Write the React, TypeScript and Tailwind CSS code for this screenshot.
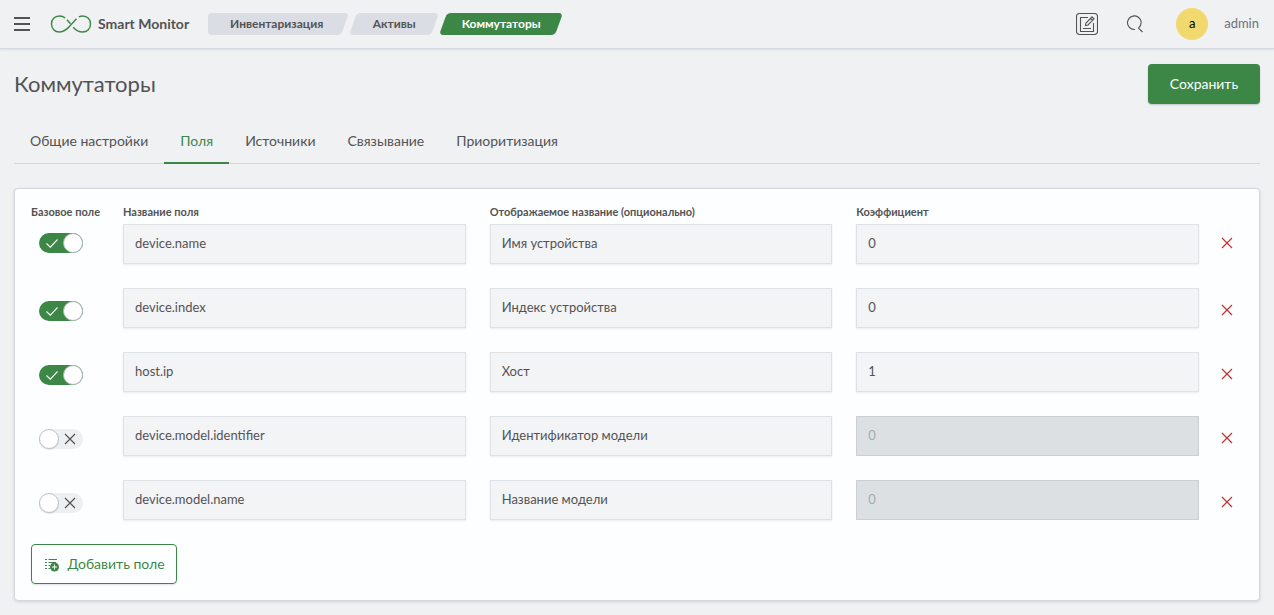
import React, { useState } from "react";

type Field = {
  id: number;
  base: boolean;
  name: string;
  title: string;
  ratio: string;
};

const initialFields: Field[] = [
  { id: 1, base: true, name: "device.name", title: "Имя устройства", ratio: "0" },
  { id: 2, base: true, name: "device.index", title: "Индекс устройства", ratio: "0" },
  { id: 3, base: true, name: "host.ip", title: "Хост", ratio: "1" },
  { id: 4, base: false, name: "device.model.identifier", title: "Идентификатор модели", ratio: "0" },
  { id: 5, base: false, name: "device.model.name", title: "Название модели", ratio: "0" },
];

const tabs = ["Общие настройки", "Поля", "Источники", "Связывание", "Приоритизация"];

const inputClass =
  "block h-10 w-full border border-[#dfe2e5] bg-[#f3f4f6] px-[11px] pb-[2px] text-[13px] text-[#535353] shadow-[0_1px_2px_rgba(0,0,0,0.08)] outline-none disabled:border-[#cad0d2] disabled:bg-[#dce0e2] disabled:text-[#a3adb3] disabled:shadow-none";

const labelClass = "mb-[6px] block whitespace-nowrap text-[11px] leading-[13px] font-bold text-[#535353]";

const Header = () => {
  return (
    <header className="box-content flex h-12 items-center border-b border-[#d3d9e2] pr-[15px] pl-[14px] shadow-[0_1px_2px_rgba(100,110,130,0.15)]">
      <button type="button" aria-label="Меню" className="flex flex-col gap-1 text-[#535353]">
        <span className="h-[2px] w-4 bg-[#535353]" />
        <span className="h-[2px] w-4 bg-[#535353]" />
        <span className="h-[2px] w-4 bg-[#535353]" />
      </button>

      <a href="#" className="ml-5 flex items-center gap-[6px] text-sm font-bold text-[#535353]">
        <svg width="42" height="18" viewBox="0 0 42 18" fill="none" stroke="#3d8746" strokeWidth="1.4">
          <path d="M15.200 3C13.600 1.600 11.800 1 9.500 1C4.500 1 1.500 4.600 1.500 9S4.500 17 9.500 17C15 17 18 13.500 21 9.800L26.500 3.800" />
          <path d="M28.800 2C30 1.300 31.200 1 32.500 1C37.500 1 40.500 4.600 40.500 9S37.500 17 32.500 17C28 17 25.500 14.800 23.200 12.200" />
          <path d="M17 4.800L20.500 8.800" />
        </svg>
        Smart Monitor
      </a>

      <nav aria-label="Навигация" className="ml-[19px] flex gap-2 text-xs font-bold text-[#535353]">
        <a href="#" className="relative isolate flex h-[22px] w-[137px] items-center justify-center">
          <span className="absolute inset-y-0 left-0 -z-10 w-10 rounded bg-[#dadde3]" />
          <span className="absolute inset-y-0 right-0 left-2 -z-10 -skew-x-20 rounded bg-[#dadde3]" />
          Инвентаризация
        </a>
        <a href="#" className="relative isolate flex h-[22px] w-[82px] items-center justify-center">
          <span className="absolute inset-0 -z-10 -skew-x-20 rounded bg-[#dadde3]" />
          Активы
        </a>
        <a href="#" aria-current="page" className="relative isolate flex h-[22px] w-[116px] items-center justify-center text-white">
          <span className="absolute inset-0 -z-10 -skew-x-20 rounded bg-[#3d8746]" />
          Коммутаторы
        </a>
      </nav>

      <div className="ml-auto flex items-center">
        <button type="button" aria-label="Редактировать" className="text-[#535353]">
          <svg width="22" height="22" viewBox="0 0 22 22" fill="none" stroke="currentColor" strokeWidth="1.1">
            <rect x="0.5" y="0.5" width="21" height="21" rx="3" />
            <path d="M12 4.500H4.500V18.500H17.500V10M7 15.500H15" />
            <path d="M9.500 12.500L10 10L16 3.800L18 5.800L12 12L9.500 12.500ZM14.500 5.500L16.500 7.500" />
          </svg>
        </button>
        <button type="button" aria-label="Поиск" className="ml-7 text-[#535353]">
          <svg width="18" height="18" viewBox="0 0 18 18" fill="none" stroke="currentColor" strokeWidth="1.1">
            <path d="M9 14.500A6.800 6.800 0 1 1 12.500 13.100L16.500 17" />
          </svg>
        </button>
        <span className="ml-8 flex size-8 items-center justify-center rounded-full bg-[#f1d86f] text-[13px] text-black">
          a
        </span>
        <span className="ml-4 text-[13px] text-[#69707d]">admin</span>
      </div>
    </header>
  );
};

type SwitchProps = {
  checked: boolean;
  id: string;
  label: string;
  onChange: () => void;
};

const Switch = ({ checked, id, label, onChange }: SwitchProps) => {
  return (
    <span className="relative ml-2 block h-5 w-11">
      <input
        id={id}
        type="checkbox"
        role="switch"
        aria-label={label}
        checked={checked}
        onChange={onChange}
        className="block h-5 w-11 cursor-pointer appearance-none rounded-full bg-[#eeeff1] checked:bg-[#3d8746]"
      />
      {checked ? (
        <>
          <svg className="pointer-events-none absolute top-1 left-[7px]" width="12" height="12" viewBox="0 0 12 12" fill="none" stroke="#fff" strokeWidth="1.1">
            <path d="M0.500 6.500L4.300 10.200L11.500 2.500" />
          </svg>
          <span className="pointer-events-none absolute top-0 right-0 size-5 rounded-full border border-[#aab8b0] bg-white" />
        </>
      ) : (
        <>
          <svg className="pointer-events-none absolute top-1 right-[7px]" width="12" height="12" viewBox="0 0 12 12" fill="none" stroke="#535353" strokeWidth="1.2">
            <path d="M1 1L11 11M11 1L1 11" />
          </svg>
          <span className="pointer-events-none absolute top-0 left-0 size-5 rounded-full border border-[#bfc2c6] bg-white shadow-[0_1px_1px_rgba(0,0,0,0.1)]" />
        </>
      )}
    </span>
  );
};

const App = () => {
  const [fields, setFields] = useState(initialFields);
  const [activeTab, setActiveTab] = useState("Поля");

  const update = (id: number, patch: Partial<Field>) =>
    setFields(fields.map((f) => (f.id === id ? { ...f, ...patch } : f)));

  const addField = () =>
    setFields([...fields, { id: Date.now(), base: false, name: "", title: "", ratio: "0" }]);

  return (
    <div className="min-h-screen bg-[#f0f1f3] font-['Lato',sans-serif] text-[#535353]">
      <Header />

      <main className="px-[14px] pt-[15px] pb-[14px]">
        <div className="flex h-10 items-center justify-between">
          <h1 className="text-[22px] leading-7">Коммутаторы</h1>
          <button
            type="button"
            className="h-10 w-28 rounded bg-[#3d8746] text-sm text-white shadow-[0_1px_2px_rgba(0,0,0,0.2)]"
          >
            Сохранить
          </button>
        </div>

        <div role="tablist" className="mt-4 flex border-b border-[#d3d7dc]">
          {tabs.map((tab) => (
            <button
              key={tab}
              type="button"
              role="tab"
              aria-selected={tab === activeTab}
              onClick={() => setActiveTab(tab)}
              className={
                tab === activeTab
                  ? "-mb-px h-11 border-b-2 border-[#3d8746] px-4 text-sm text-[#3d8746]"
                  : "-mb-px h-11 border-b-2 border-transparent px-4 text-sm"
              }
            >
              {tab}
            </button>
          ))}
        </div>

        <section className="mt-6 rounded border border-[#d3d7de] bg-[#fdfeff] p-4 shadow-[0_1px_3px_rgba(80,90,110,0.2)]">
          <div className="flex flex-col gap-6">
            {fields.map((field, index) => {
              const first = index === 0;
              return (
                <div key={field.id} className="flex items-start gap-3">
                  <div className="grid flex-1 grid-cols-[68px_1fr_1fr_1fr] gap-6">
                    <div>
                      {first && <label htmlFor={`base-${field.id}`} className={labelClass}>Базовое поле</label>}
                      <div className={first ? "pt-[9px]" : "pt-[13px]"}>
                        <Switch
                          id={`base-${field.id}`}
                          label="Базовое поле"
                          checked={field.base}
                          onChange={() => update(field.id, { base: !field.base })}
                        />
                      </div>
                    </div>
                    <div>
                      {first && <label htmlFor={`name-${field.id}`} className={labelClass}>Название поля</label>}
                      <input
                        id={`name-${field.id}`}
                        type="text"
                        aria-label="Название поля"
                        value={field.name}
                        onChange={(e) => update(field.id, { name: e.target.value })}
                        className={inputClass}
                      />
                    </div>
                    <div>
                      {first && (
                        <label htmlFor={`title-${field.id}`} className={labelClass}>
                          Отображаемое название (опционально)
                        </label>
                      )}
                      <input
                        id={`title-${field.id}`}
                        type="text"
                        aria-label="Отображаемое название (опционально)"
                        value={field.title}
                        onChange={(e) => update(field.id, { title: e.target.value })}
                        className={inputClass}
                      />
                    </div>
                    <div>
                      {first && <label htmlFor={`ratio-${field.id}`} className={labelClass}>Коэффициент</label>}
                      <input
                        id={`ratio-${field.id}`}
                        type="text"
                        aria-label="Коэффициент"
                        value={field.ratio}
                        disabled={!field.base}
                        onChange={(e) => update(field.id, { ratio: e.target.value })}
                        className={inputClass}
                      />
                    </div>
                  </div>
                  <div className={first ? "pt-[22px]" : "pt-[6px]"}>
                    <button
                      type="button"
                      aria-label="Удалить поле"
                      onClick={() => setFields(fields.filter((f) => f.id !== field.id))}
                      className="flex size-8 items-center justify-center text-[#c4302b]"
                    >
                      <svg width="12" height="12" viewBox="0 0 12 12" fill="none" stroke="currentColor" strokeWidth="1.2">
                        <path d="M1 1L11 11M11 1L1 11" />
                      </svg>
                    </button>
                  </div>
                </div>
              );
            })}
          </div>

          <button
            type="button"
            onClick={addField}
            className="mt-6 flex h-10 w-[146px] items-center justify-center gap-2 rounded border border-[#3d8746] text-sm text-[#3d8746] shadow-[0_1px_2px_rgba(0,0,0,0.12)]"
          >
            <svg width="16" height="16" viewBox="-1 0 16 16" fill="none" stroke="currentColor">
              <path d="M1 3.500H3M4.500 3.500H13M1 6.500H3M4.500 6.500H12M1 9.500H3M4.500 9.500H6M1 12.500H3M4.500 12.500H6" />
              <circle cx="10.500" cy="11" r="4.500" fill="currentColor" stroke="none" />
              <path d="M10.500 8.500V13.500M8 11H13" stroke="#fff" />
            </svg>
            Добавить поле
          </button>
        </section>
      </main>
    </div>
  );
};

export default App;
